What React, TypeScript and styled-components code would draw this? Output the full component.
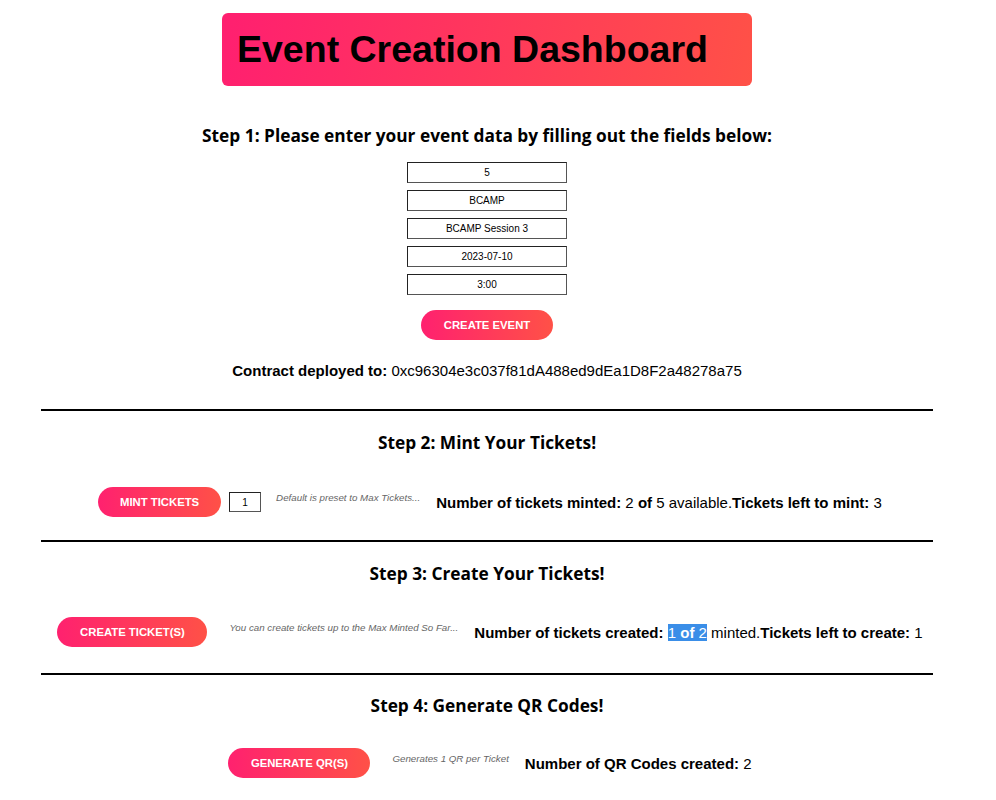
import React from "react";
import styled, { createGlobalStyle } from "styled-components";

const GlobalStyle = createGlobalStyle`
  html, body {
    margin: 0;
    padding: 0;
    background: #fff;
    font-family: "Liberation Sans", Arial, sans-serif;
    color: #000;
  }
`;

const gradient = "linear-gradient(90deg, #ff216f 0%, #ff5147 100%)";

const Page = styled.div`
  width: 958px;
  margin-left: 8px;
  padding-top: 13px;
  padding-bottom: 40px;
`;

const TitleBox = styled.div`
  width: 530px;
  height: 73px;
  margin: 0 auto;
  box-sizing: border-box;
  padding: 0 15px;
  display: flex;
  align-items: center;
  border-radius: 6px;
  background: linear-gradient(100deg, #ff1f70 0%, #ff5147 100%);
`;

const Title = styled.h1`
  margin: 0;
  font-family: "Liberation Sans", Arial, sans-serif;
  font-size: 37.5px;
  font-weight: 700;
  color: #000;
`;

const StepTitle = styled.h2<{ top: number }>`
  margin: ${({ top }) => top}px 0 0;
  text-align: center;
  font-family: "Open Sans", sans-serif;
  font-size: 17.3px;
  font-weight: 700;
  line-height: 22px;
`;

const Fields = styled.div`
  display: flex;
  flex-direction: column;
  align-items: center;
  gap: 7px;
  margin-top: 15px;
`;

const Field = styled.input`
  width: 160px;
  height: 21px;
  box-sizing: border-box;
  border: 1px solid #555;
  border-top-color: #222;
  border-left-color: #222;
  font-family: "Liberation Sans", Arial, sans-serif;
  font-size: 10px;
  text-align: center;
  padding: 0;
  color: #000;
  background: #fff;
`;

const PillButton = styled.button<{ w: number }>`
  width: ${({ w }) => w}px;
  height: 30px;
  border: none;
  border-radius: 15px;
  background: ${gradient};
  color: #fff;
  font-family: "Liberation Sans", Arial, sans-serif;
  font-size: 11.3px;
  font-weight: 700;
  padding: 0;
  flex-shrink: 0;
  cursor: pointer;
`;

const Center = styled.div`
  display: flex;
  justify-content: center;
  margin-top: 15px;
`;

const Contract = styled.p`
  margin: 22px 0 0;
  text-align: center;
  font-size: 15px;
  line-height: 18px;
`;

const Divider = styled.hr<{ top: number }>`
  width: 892px;
  margin: ${({ top }) => top}px auto 0;
  border: none;
  border-top: 2px solid #000;
  height: 0;
`;

const Row = styled.div<{ top: number }>`
  display: flex;
  justify-content: center;
  align-items: center;
  margin-top: ${({ top }) => top}px;
  padding-left: 6px;
`;

const Qty = styled.input`
  width: 32px;
  height: 20px;
  box-sizing: border-box;
  margin-left: 8px;
  border: 1px solid #555;
  border-top-color: #222;
  border-left-color: #222;
  font-size: 10px;
  text-align: center;
  padding: 0;
  font-family: "Liberation Sans", Arial, sans-serif;
`;

const Note = styled.span<{ ml: number }>`
  margin-left: ${({ ml }) => ml}px;
  align-self: flex-start;
  margin-top: 5px;
  font-size: 9.75px;
  font-style: italic;
  color: #666;
`;

const Stat = styled.span`
  margin-left: 16px;
  font-size: 15px;
  white-space: nowrap;
`;

const Selected = styled.span`
  background: #3a8ee8;
  color: #fff;
`;

export default function App() {
  return (
    <>
      <GlobalStyle />
      <Page>
        <TitleBox>
          <Title>Event Creation Dashboard</Title>
        </TitleBox>

        <StepTitle top={39}>
          Step 1: Please enter your event data by filling out the fields below:
        </StepTitle>
        <Fields>
          <Field defaultValue="5" />
          <Field defaultValue="BCAMP" />
          <Field defaultValue="BCAMP Session 3" />
          <Field defaultValue="2023-07-10" />
          <Field defaultValue="3:00" />
        </Fields>
        <Center>
          <PillButton w={132}>CREATE EVENT</PillButton>
        </Center>
        <Contract>
          <b>Contract deployed to:</b> 0xc96304e3c037f81dA488ed9dEa1D8F2a48278a75
        </Contract>

        <Divider top={29} />
        <StepTitle top={21}>Step 2: Mint Your Tickets!</StepTitle>
        <Row top={33}>
          <PillButton w={123}>MINT TICKETS</PillButton>
          <Qty defaultValue="1" />
          <Note ml={15}>Default is preset to Max Tickets...</Note>
          <Stat>
            <b>Number of tickets minted:</b> 2 <b>of</b> 5 available.<b>Tickets left to mint:</b> 3
          </Stat>
        </Row>

        <Divider top={23} />
        <StepTitle top={21}>Step 3: Create Your Tickets!</StepTitle>
        <Row top={32}>
          <PillButton w={150}>CREATE TICKET(S)</PillButton>
          <Note ml={22}>You can create tickets up to the Max Minted So Far...</Note>
          <Stat>
            <b>Number of tickets created:</b>{" "}
            <Selected>
              1 <b>of</b> 2
            </Selected>{" "}
            minted.<b>Tickets left to create:</b> 1
          </Stat>
        </Row>

        <Divider top={26} />
        <StepTitle top={20}>Step 4: Generate QR Codes!</StepTitle>
        <Row top={31}>
          <PillButton w={142}>GENERATE QR(S)</PillButton>
          <Note ml={22}>Generates 1 QR per Ticket</Note>
          <Stat>
            <b>Number of QR Codes created:</b> 2
          </Stat>
        </Row>
      </Page>
    </>
  );
}
